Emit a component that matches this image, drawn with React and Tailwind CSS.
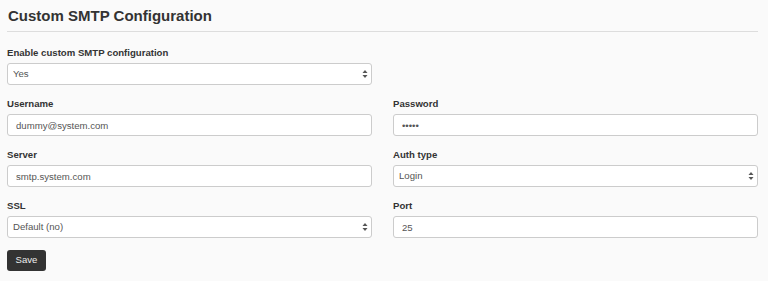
import React, { useState } from "react";

const SelectArrows = () => (
  <svg
    className="pointer-events-none absolute right-[4px] top-1/2 -translate-y-1/2"
    width="6"
    height="9"
    viewBox="0 0 6 9"
  >
    <path d="M3 0.5 L5.5 3.5 L0.5 3.5 Z" fill="#555" />
    <path d="M3 8.5 L5.5 5.5 L0.5 5.5 Z" fill="#555" />
  </svg>
);

const Field = ({ label, children }) => (
  <div className="mb-[12px]">
    <label className="block text-[9.6px] font-bold leading-[13px] text-[#333] mb-[4px]">{label}</label>
    {children}
  </div>
);

const SelectBox = ({ value, options, onChange }) => (
  <div className="relative">
    <select
      value={value}
      onChange={(e) => onChange(e.target.value)}
      className="block w-full h-[22px] appearance-none rounded-[3px] border border-[#ccc] bg-white pl-[5px] pr-4 text-[9.6px] text-[#555] outline-none"
    >
      {options.map((o) => (
        <option key={o}>{o}</option>
      ))}
    </select>
    <SelectArrows />
  </div>
);

const TextBox = ({ value, type = "text", onChange }) => (
  <input
    type={type}
    value={value}
    onChange={(e) => onChange(e.target.value)}
    className="block w-full h-[22px] rounded-[3px] border border-[#ccc] bg-white px-[8px] text-[9.6px] text-[#555] outline-none"
  />
);

export default function App() {
  const [enabled, setEnabled] = useState("Yes");
  const [username, setUsername] = useState("dummy@system.com");
  const [password, setPassword] = useState("dummy");
  const [server, setServer] = useState("smtp.system.com");
  const [authType, setAuthType] = useState("Login");
  const [ssl, setSsl] = useState("Default (no)");
  const [port, setPort] = useState("25");

  return (
    <div
      className="min-h-[281px] bg-[#fafafa] pt-[6px] pl-[7px] pr-[10px]"
      style={{ fontFamily: '"Liberation Sans", Arial, sans-serif' }}
    >
      <h3 className="text-[15px] font-bold leading-[20px] text-[#333] pl-[1px]">Custom SMTP Configuration</h3>
      <hr className="mt-[5px] mb-[14px] border-t border-[#ddd]" />

      <div className="w-[365px]">
        <Field label="Enable custom SMTP configuration">
          <SelectBox value={enabled} options={["Yes", "No"]} onChange={setEnabled} />
        </Field>
      </div>

      <div className="grid grid-cols-2 gap-x-[21px]">
        <Field label="Username">
          <TextBox value={username} onChange={setUsername} />
        </Field>
        <Field label="Password">
          <TextBox type="password" value={password} onChange={setPassword} />
        </Field>
        <Field label="Server">
          <TextBox value={server} onChange={setServer} />
        </Field>
        <Field label="Auth type">
          <SelectBox value={authType} options={["Login", "Plain", "CRAM-MD5"]} onChange={setAuthType} />
        </Field>
        <Field label="SSL">
          <SelectBox value={ssl} options={["Default (no)", "Yes", "No"]} onChange={setSsl} />
        </Field>
        <Field label="Port">
          <TextBox value={port} onChange={setPort} />
        </Field>
      </div>

      <button className="block h-[21px] w-[39px] rounded-[3px] bg-[#333] text-[9.6px] text-[#eee]">Save</button>
    </div>
  );
}
